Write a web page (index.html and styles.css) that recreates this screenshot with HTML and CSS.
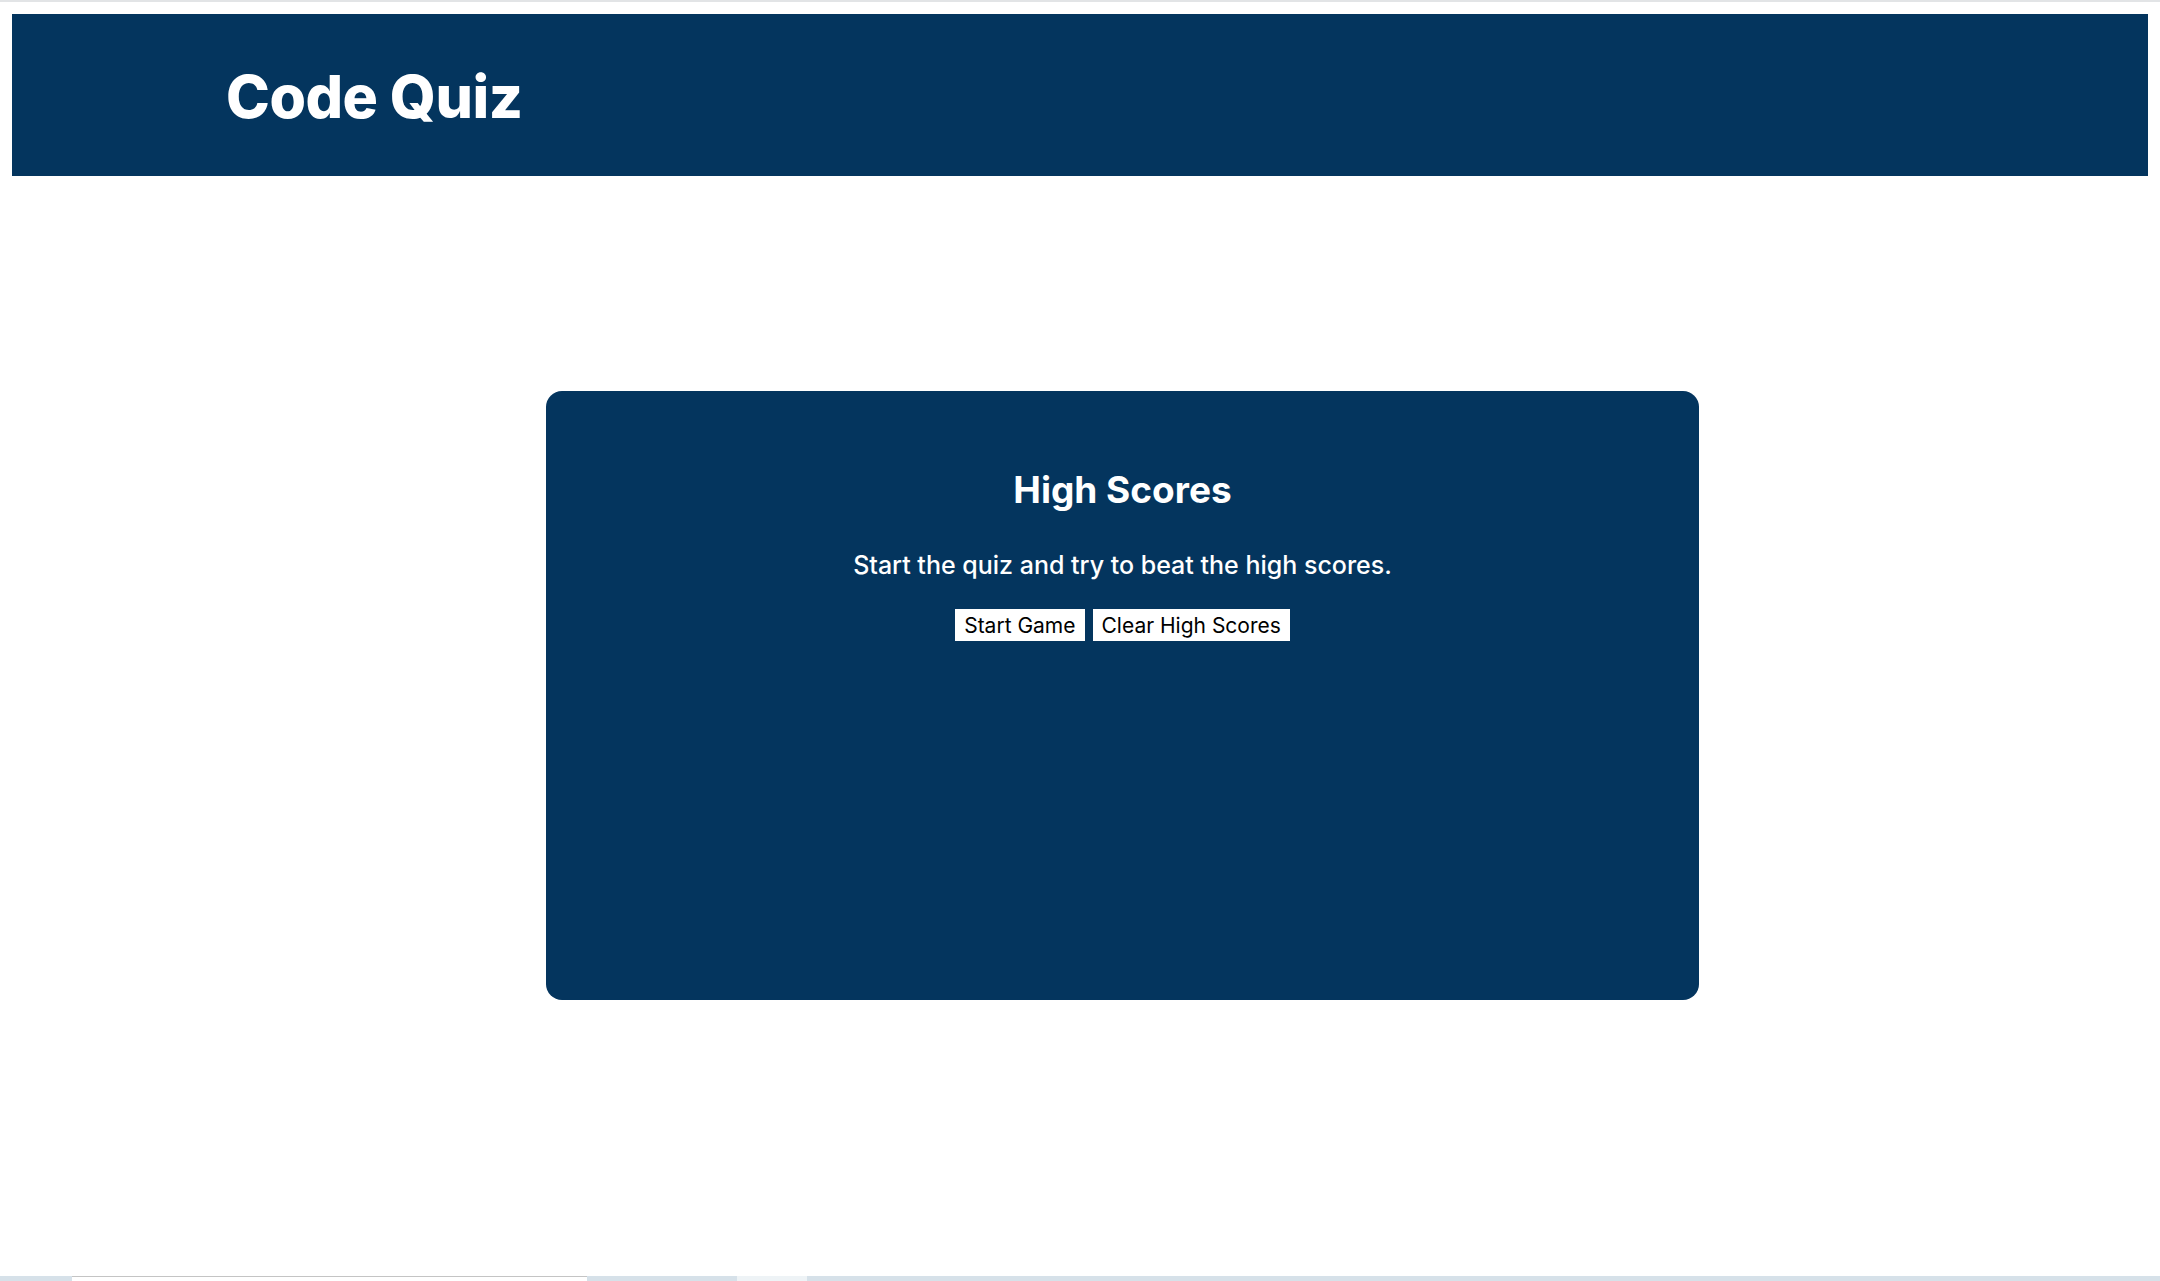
FILE: index.html
```html
<!DOCTYPE html>
<html lang="en">
<head>
<meta charset="utf-8">
<title>Code Quiz</title>
<link rel="stylesheet" href="styles.css">
</head>
<body>
<div class="topline"></div>
<header class="site-header">
  <h1 class="brand">Code Quiz</h1>
</header>
<main class="main">
  <section class="card">
    <h2 class="card-title">High Scores</h2>
    <p class="card-text">Start the quiz and try to beat the high scores.</p>
    <div class="actions">
      <button class="btn">Start Game</button>
      <button class="btn">Clear High Scores</button>
    </div>
  </section>
</main>
<div class="taskbar">
  <div class="taskbar-a"></div>
  <div class="taskbar-b"></div>
  <div class="taskbar-c"></div>
  <div class="taskbar-d"></div>
</div>
</body>
</html>
```
FILE: styles.css
```css
* { box-sizing: border-box; }
html, body { height: 100%; }
body {
  margin: 0;
  background: #ffffff;
  font-family: "Inter", "Open Sans", sans-serif;
  display: flex;
  flex-direction: column;
}
.topline { height: 2px; background: #e2e4e6; }
.site-header {
  margin: 12px 12px 0;
  height: 162px;
  background: #04355e;
  display: flex;
  align-items: center;
  padding-left: 214px;
}
.brand {
  margin: 0;
  color: #ffffff;
  font-size: 59px;
  font-weight: 800;
  letter-spacing: -0.5px;
  position: relative;
  top: 1px;
}
.main { flex: 1; }
.card {
  margin: 215px 0 0 546px;
  width: 1153px;
  height: 609px;
  background: #04355e;
  border-radius: 16px;
  padding-top: 74px;
  text-align: center;
  color: #ffffff;
}
.card-title {
  margin: 0;
  font-size: 37px;
  font-weight: 700;
  line-height: 50px;
}
.card-text {
  margin: 33px 0 0;
  font-size: 25px;
  font-weight: 500;
  line-height: 34px;
}
.actions {
  margin-top: 27px;
  display: flex;
  justify-content: center;
  gap: 8px;
}
.btn {
  font-family: "Inter", sans-serif;
  font-size: 21px;
  background: #ffffff;
  color: #000000;
  border: none;
  border-radius: 0;
  height: 32px;
  padding: 0 9px;
}
.taskbar { height: 5px; display: flex; background: #d6e1e9; }
.taskbar-a { width: 72px; }
.taskbar-b { width: 515px; background: #ffffff; border-top: 1px solid #c4c4c4; }
.taskbar-c { width: 150px; }
.taskbar-d { width: 70px; background: #eef3f6; }
```
